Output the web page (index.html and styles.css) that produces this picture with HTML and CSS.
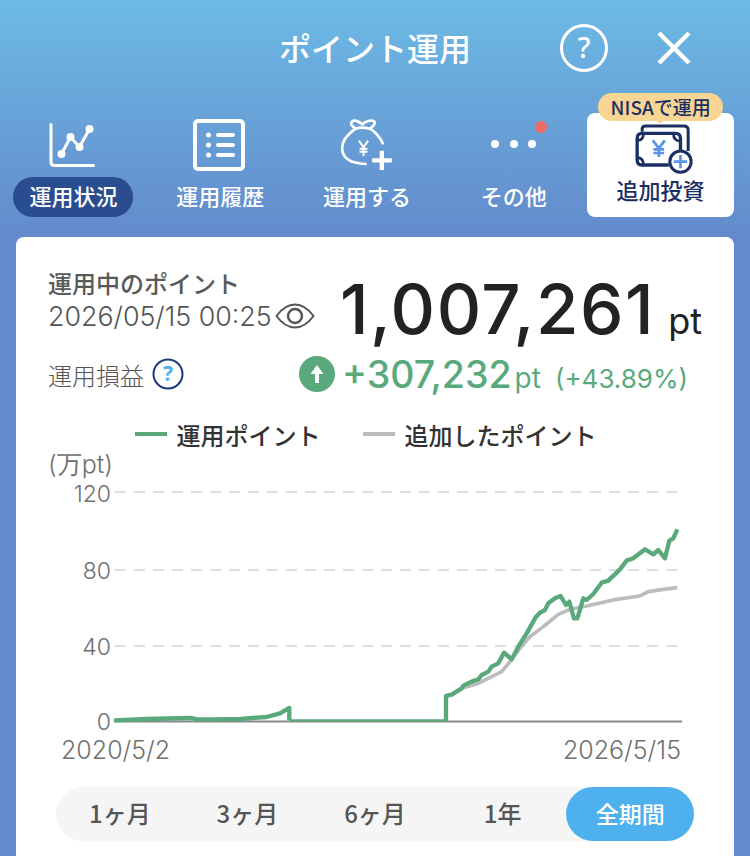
FILE: index.html
```html
<!DOCTYPE html>
<html lang="ja">
<head>
<meta charset="utf-8">
<title>ポイント運用</title>
<link rel="stylesheet" href="styles.css">
</head>
<body>
<div class="app">
  <header class="top">
    <h1 class="title">ポイント運用</h1>
    <div class="top-actions">
      <svg class="ic-help" viewBox="0 0 50 50"><circle cx="25" cy="25" r="22.5" fill="none" stroke="#fff" stroke-width="3"/><text x="25" y="35" text-anchor="middle" class="ic-help-q">?</text></svg>
      <svg class="ic-close" viewBox="0 0 34 34"><path d="M2 2L32 32M32 2L2 32" stroke="#fff" stroke-width="4.4" fill="none"/></svg>
    </div>
  </header>
  <nav class="tabs">
    <div class="tab">
      <svg class="tab-ic" viewBox="0 0 60 56"><path d="M8 5.500V43Q8 46.500 11.500 46.500H50.500" fill="none" stroke="#fff" stroke-width="3" stroke-linecap="round"/><path d="M18.500 35L27.500 18L36.500 28L46.500 10" fill="none" stroke="#fff" stroke-width="3"/><circle cx="18.500" cy="35" r="4" fill="#fff"/><circle cx="27.500" cy="18" r="4" fill="#fff"/><circle cx="36.500" cy="28" r="4" fill="#fff"/><circle cx="46.500" cy="10" r="4" fill="#fff"/></svg>
      <span class="tab-label tab-label-on">運用状況</span>
    </div>
    <div class="tab">
      <svg class="tab-ic" viewBox="0 0 60 56"><rect x="5" y="2" width="48" height="48" rx="3" fill="none" stroke="#fff" stroke-width="4"/><circle cx="18.500" cy="16" r="2.500" fill="#fff"/><circle cx="18.500" cy="26" r="2.500" fill="#fff"/><circle cx="18.500" cy="36" r="2.500" fill="#fff"/><path d="M28 16H43M28 26H43M28 36H43" stroke="#fff" stroke-width="4" stroke-linecap="round"/></svg>
      <span class="tab-label">運用履歴</span>
    </div>
    <div class="tab">
      <svg class="tab-ic" viewBox="0 0 60 56"><g transform="translate(-7.500 -9) scale(.3333)" fill="none" stroke="#fff" stroke-linecap="round" stroke-linejoin="round"><path stroke-width="8" d="M78 56C70 50 60 42 68 34C76 28 90 36 99 43C106 34 125 28 134 34C140 42 128 52 120 56C105 52 92 52 78 56Z"/><path stroke-width="8" d="M78 56C55 72 38 92 38 115C38 142 60 160 108 162M122 56C140 68 152 84 160 100"/><path stroke-width="6" stroke-linecap="butt" stroke-linejoin="miter" d="M88 92L102 112L116 92M102 112V138M90 116H114M90 125H114"/><path stroke-width="13" stroke-linecap="butt" d="M157 122V180M128 151H187"/></g></svg>
      <span class="tab-label">運用する</span>
    </div>
    <div class="tab">
      <div class="more"><span class="dot"></span><span class="dot"></span><span class="dot"></span><span class="badge-red"></span></div>
      <span class="tab-label">その他</span>
    </div>
    <div class="tab-card">
      <span class="nisa">NISAで運用</span>
      <svg class="card-ic" viewBox="0 0 60 50"><g transform="translate(-5.500 -10) scale(.3333)" fill="none" stroke-linejoin="round"><path stroke="#1b2f63" stroke-width="9" d="M50 50V42Q50 33 60 33H175Q188 33 188 46V108"/><path stroke="#1b2f63" stroke-width="10" d="M130 150H50Q35 150 35 135V70Q35 55 50 55H150Q165 55 165 70V105"/><path stroke="#1b2f63" stroke-width="8" d="M35 76Q54 76 54 56M35 128Q54 128 54 150M165 78Q144 78 144 56"/><path stroke="#5b93ea" stroke-width="8" d="M82 76L100 100L118 76M100 100V126M84 103H116M84 114H116"/><circle cx="165" cy="140" r="32" fill="#fff" stroke="#1b2f63" stroke-width="9"/><path stroke="#5b93ea" stroke-width="8" d="M165 120V160M145 140H185"/></g></svg>
      <span class="card-label">追加投資</span>
    </div>
  </nav>
  <main class="card">
    <section class="summary">
      <div class="sum-row">
        <div class="sum-left">
          <div class="sum-name">運用中のポイント</div>
          <div class="sum-date">2026/05/15 00:25<svg class="ic-eye" viewBox="0 0 40 26"><path d="M1.500 13C8 4 14 1.500 20 1.500S32 4 38.500 13C32 22 26 24.500 20 24.500S8 22 1.500 13Z" fill="none" stroke="#555" stroke-width="2"/><circle cx="20" cy="13" r="7" fill="none" stroke="#555" stroke-width="2.400"/></svg></div>
        </div>
        <div class="total"><span class="total-num">1,007,261</span><span class="total-unit">pt</span></div>
      </div>
      <div class="gain-row">
        <div class="gain-left"><span>運用損益</span><svg class="ic-q" viewBox="0 0 32 32"><circle cx="16" cy="16" r="14.500" fill="#fff" stroke="#1b3a78" stroke-width="2"/><text x="16" y="23" text-anchor="middle" class="ic-q-t">?</text></svg></div>
        <div class="gain">
          <svg class="ic-up" viewBox="0 0 36 36"><circle cx="18" cy="18" r="18" fill="#5aa97c"/><path d="M18 9L24.500 18H20V27H16V18H11.500Z" fill="#fff"/></svg>
          <span class="gain-num">+307,232</span><span class="gain-unit">pt</span><span class="gain-pct">(+43.89%)</span>
        </div>
      </div>
    </section>
    <div class="legend">
      <span class="lg"><i class="lg-line lg-green"></i>運用ポイント</span>
      <span class="lg"><i class="lg-line lg-gray"></i>追加したポイント</span>
    </div>
    <svg class="chart" viewBox="16 450 718 320">
      <text x="48" y="473" class="ax ax-big">(万pt)</text>
      <g class="grid"><path d="M115 492H682M115 570H682M115 646H682"/></g>
      <text x="111" y="502" class="ax" text-anchor="end">120</text>
      <text x="111" y="578.500" class="ax" text-anchor="end">80</text>
      <text x="111" y="655" class="ax" text-anchor="end">40</text>
      <text x="111" y="730" class="ax" text-anchor="end">0</text>
      <path d="M115 721.500H682" stroke="#8a8a8a" stroke-width="2" fill="none"/>
      <g transform="translate(430 520) scale(.3333)">
        <polyline class="s-gray" points="95,505 140,492 175,475 215,455 240,425 270,385 300,350 340,320 385,283 420,268 470,258 560,238 630,228 655,215 700,208 742,203"/>
        <polyline class="s-green" points="48,603 48,528 65,524 95,505 100,497 125,485 145,478 155,465 175,455 185,440 205,430 222,398 245,418 265,380 290,340 318,290 330,278 345,270 355,250 375,235 392,228 408,255 418,245 432,295 442,295 460,235 470,240 490,222 515,188 535,182 570,148 590,122 610,115 645,88 670,103 685,90 705,115 718,62 730,55 742,28"/>
      </g>
      <g transform="translate(40 640) scale(.3333)">
        <polyline class="s-green" points="222,241 320,237 455,234 470,238 520,238 600,237 680,231 720,220 748,204 748,241"/>
        <path class="s-flat" d="M748 241H1222"/>
      </g>
      <text x="61" y="759" class="ax ax-big">2020/5/2</text>
      <text x="681" y="759" class="ax ax-big" text-anchor="end">2026/5/15</text>
    </svg>
    <div class="seg">
      <span class="seg-i">1ヶ月</span>
      <span class="seg-i">3ヶ月</span>
      <span class="seg-i">6ヶ月</span>
      <span class="seg-i">1年</span>
      <span class="seg-i seg-on">全期間</span>
    </div>
  </main>
</div>
</body>
</html>
```
FILE: styles.css
```css
* { box-sizing: border-box; }
html, body { margin: 0; padding: 0; }
body {
  width: 750px;
  height: 856px;
  overflow: hidden;
  background: #638ccd;
  font-family: "Noto Sans CJK JP", sans-serif;
}
.app {
  height: 856px;
  overflow: hidden;
  background: linear-gradient(180deg, #6cbae5 0, #638acb 240px, #638ccd 856px);
}
.top {
  height: 93px;
  position: relative;
  display: flex;
  justify-content: center;
  padding-top: 23px;
}
.title {
  margin: 0;
  font-size: 32px;
  line-height: 48px;
  height: 48px;
  font-weight: 500;
  color: #fff;
}
.top-actions {
  position: absolute;
  left: 559px;
  top: 23px;
  display: flex;
  align-items: center;
  gap: 47.5px;
}
.ic-help { width: 50px; height: 50px; display: block; }
.ic-help-q { font: 500 29px "Noto Sans", sans-serif; fill: #fff; }
.ic-close { width: 34px; height: 34px; display: block; }
.tabs {
  height: 124px;
  display: flex;
  padding: 0 16px 0 0;
  position: relative;
}
.tab {
  position: relative;
  width: 147px;
  display: flex;
  flex-direction: column;
  align-items: center;
  padding-top: 26px;
}
.tab-ic { width: 60px; height: 56px; display: block; overflow: visible; }
.tab-label {
  margin-top: 2px;
  font-size: 22px;
  line-height: 36px;
  height: 40px;
  font-weight: 500;
  color: #fff;
  padding: 0 16px;
  border-radius: 20px;
}
.tab-label-on { background: #2a4d8f; }
.more {
  position: relative;
  height: 56px;
  width: 60px;
  display: flex;
  justify-content: center;
  gap: 10.3px;
  padding-top: 21px;
}
.dot { width: 8px; height: 8px; border-radius: 50%; background: #fff; }
.badge-red {
  position: absolute;
  right: -3px;
  top: 2px;
  width: 12px;
  height: 12px;
  border-radius: 50%;
  background: #ef6a64;
}
.tab-card {
  position: relative;
  width: 147px;
  height: 104px;
  margin-top: 20px;
  background: #fff;
  border-radius: 8px;
  display: flex;
  flex-direction: column;
  align-items: center;
  padding-top: 12px;
}
.nisa {
  position: absolute;
  left: 11px;
  top: -20px;
  width: 125px;
  height: 28px;
  border-radius: 14px;
  background: #f8d592;
  color: #1b2f63;
  font: 500 19px/28px "Noto Sans CJK JP", sans-serif;
  text-align: center;
}
.nisa::after {
  content: "";
  position: absolute;
  left: 58px;
  top: 27px;
  border: 4px solid transparent;
  border-top-color: #f8d592;
  border-bottom-width: 0;
}
.card-ic { width: 60px; height: 50px; display: block; overflow: visible; }
.card-label {
  font-size: 22px;
  line-height: 32px;
  font-weight: 500;
  color: #1b2f63;
  margin-top: -2px;
}
.card {
  margin: 20px 16px 0;
  height: 640px;
  background: #fff;
  border-radius: 8px 8px 0 0;
  padding-top: 28px;
}
.summary { padding: 0 32px; }
.sum-row { display: flex; justify-content: space-between; align-items: flex-start; }
.sum-name { font-size: 24px; line-height: 36px; font-weight: 500; color: #5a5a5a; }
.sum-date {
  font-family: Inter, sans-serif;
  font-weight: 300;
  font-size: 26.8px;
  line-height: 30px;
  color: #555;
  display: flex;
  align-items: center;
  white-space: nowrap;
}
.ic-eye { width: 40px; height: 26px; margin-left: 3px; display: block; flex: none; }
.total { display: flex; align-items: baseline; color: #222; font-family: Inter, sans-serif; font-weight: 500; margin-top: 2px; margin-bottom: -2px; }
.total-num { font-size: 69px; line-height: 84px; letter-spacing: 1.5px; }
.total-unit { font-size: 36px; margin-left: 13px; font-weight: 400; }
.gain-row { display: flex; justify-content: space-between; align-items: center; margin-top: 5px; height: 40px; }
.gain-left { display: flex; align-items: center; gap: 8px; font-size: 24px; font-weight: 300; color: #555; }
.ic-q { width: 32px; height: 32px; display: block; }
.ic-q-t { font: 700 21px "Noto Sans", sans-serif; fill: #4fb0ee; }
.gain { display: flex; align-items: baseline; color: #5aa97c; font-family: Inter, sans-serif; margin-right: 14px; }
.ic-up { width: 36px; height: 36px; display: block; align-self: center; margin-right: 7px; }
.gain-num { font-size: 37.5px; font-weight: 500; }
.gain-unit { font-size: 28px; margin-left: 3px; }
.gain-pct { font-size: 26px; margin-left: 14px; }
.legend {
  display: flex;
  justify-content: center;
  gap: 42px;
  margin-top: 24px;
  padding-right: 19px;
  height: 32px;
}
.lg { display: flex; align-items: center; font-size: 24px; font-weight: 500; color: #333; }
.lg-line { display: block; width: 32px; height: 4px; margin-right: 10px; }
.lg-green { background: #5aa97c; }
.lg-gray { background: #bcbcbc; }
.chart { display: block; width: 718px; height: 320px; }
.ax { font: 300 23px Inter, sans-serif; fill: #707070; }
.ax-big { font-size: 25px; }
.grid path { stroke: #dedede; stroke-width: 2; stroke-dasharray: 11 8; fill: none; }
.s-green { fill: none; stroke: #5aa97c; stroke-width: 13; stroke-linejoin: round; }
.s-flat { fill: none; stroke: #5aa97c; stroke-width: 7; }
.s-gray { fill: none; stroke: #bcbcbc; stroke-width: 11; stroke-linejoin: round; }
.seg {
  margin: 17px 40px 0;
  height: 54px;
  border-radius: 27px;
  background: #f5f5f5;
  display: grid;
  grid-template-columns: repeat(5, 1fr);
}
.seg-i { display: flex; align-items: center; justify-content: center; font-size: 24px; font-weight: 500; color: #555; border-radius: 27px; padding-bottom: 3px; }
.seg-on { background: #4fb0ee; color: #fff; font-size: 23px; }
```
